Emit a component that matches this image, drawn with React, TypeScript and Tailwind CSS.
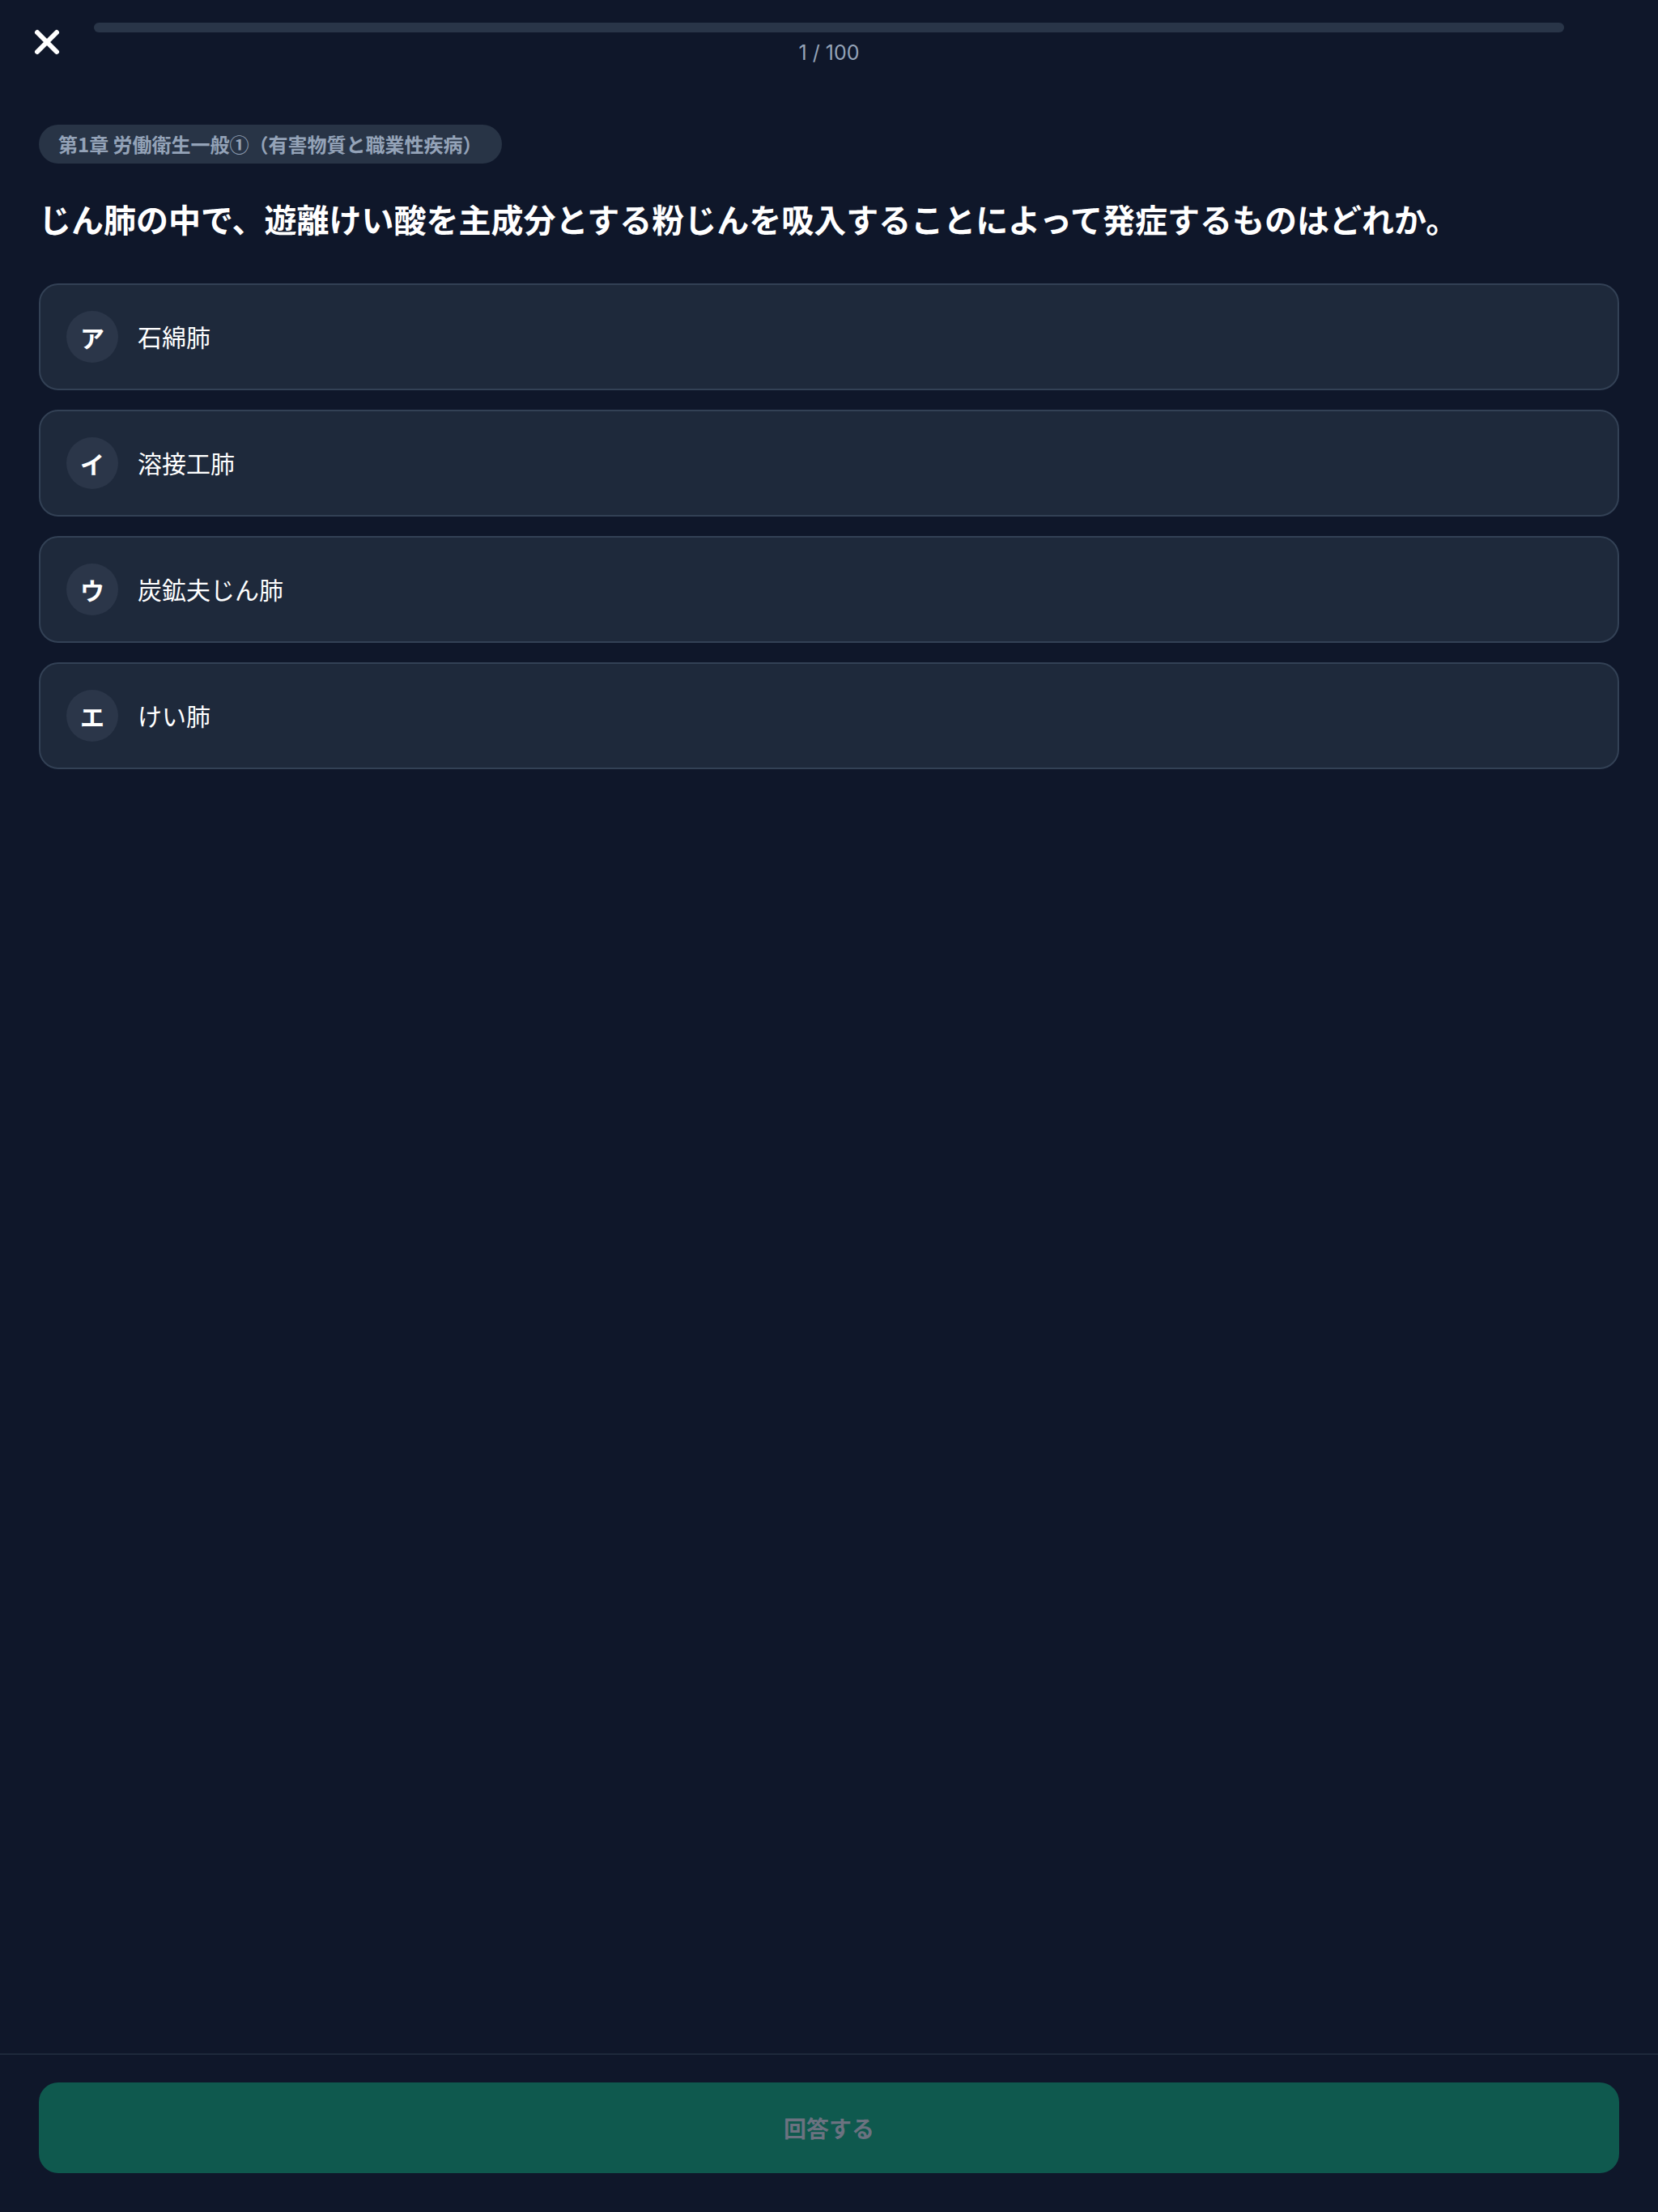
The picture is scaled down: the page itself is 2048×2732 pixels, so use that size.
import { X } from "lucide-react";

const options = [
  { k: "ア", t: "石綿肺" },
  { k: "イ", t: "溶接工肺" },
  { k: "ウ", t: "炭鉱夫じん肺" },
  { k: "エ", t: "けい肺" },
];

export default function App() {
  return (
    <div className="min-h-screen flex flex-col bg-[#0f172a] text-white font-[Inter,'Noto_Sans_CJK_JP',sans-serif]">
      <header className="flex items-start px-[34px] pt-[28px]">
        <button className="w-12 h-12 flex items-center justify-center text-white">
          <X size={48} strokeWidth={3} />
        </button>
        <div className="flex-1 mx-[34px] flex flex-col items-center">
          <div className="w-full h-3 rounded-full bg-[#293548]" />
          <div className="mt-[5px] text-[25px] leading-[40px] text-[#94a3b8]">1 / 100</div>
        </div>
        <div className="w-12 h-12" />
      </header>

      <main className="flex-1 px-12 pt-[69px]">
        <div className="inline-flex items-center h-12 px-6 rounded-full bg-[#283446] text-[24px] leading-[32px] font-bold text-[#94a3b8] font-['Noto_Sans_CJK_JP',sans-serif]">
          第1章 労働衛生一般①（有害物質と職業性疾病）
        </div>
        <h1 className="mt-[40px] text-[40px] leading-[56px] font-bold text-white font-['Noto_Sans_CJK_JP',sans-serif]">
          じん肺の中で、遊離けい酸を主成分とする粉じんを吸入することによって発症するものはどれか。
        </h1>
        <div className="mt-[52px] flex flex-col gap-6">
          {options.map((o) => (
            <div
              key={o.k}
              className="flex items-center gap-6 p-8 rounded-3xl border-2 border-[#334155] bg-[#1e293b]"
            >
              <div className="w-16 h-16 shrink-0 rounded-full bg-[#2b3649] flex items-center justify-center text-[30px] font-bold text-white font-['Noto_Sans_CJK_JP',sans-serif]">
                {o.k}
              </div>
              <div className="text-[30px] leading-[40px] -mt-[3px] text-white font-['Noto_Sans_CJK_JP',sans-serif]">{o.t}</div>
            </div>
          ))}
        </div>
      </main>

      <footer className="border-t-2 border-[#1e293b] px-12 pt-[34px] pb-12">
        <button className="w-full h-[112px] rounded-3xl bg-[#0f594e] flex items-center justify-center text-[28px] font-bold text-[#6b7280] font-['Noto_Sans_CJK_JP',sans-serif]">
          回答する
        </button>
      </footer>
    </div>
  );
}
